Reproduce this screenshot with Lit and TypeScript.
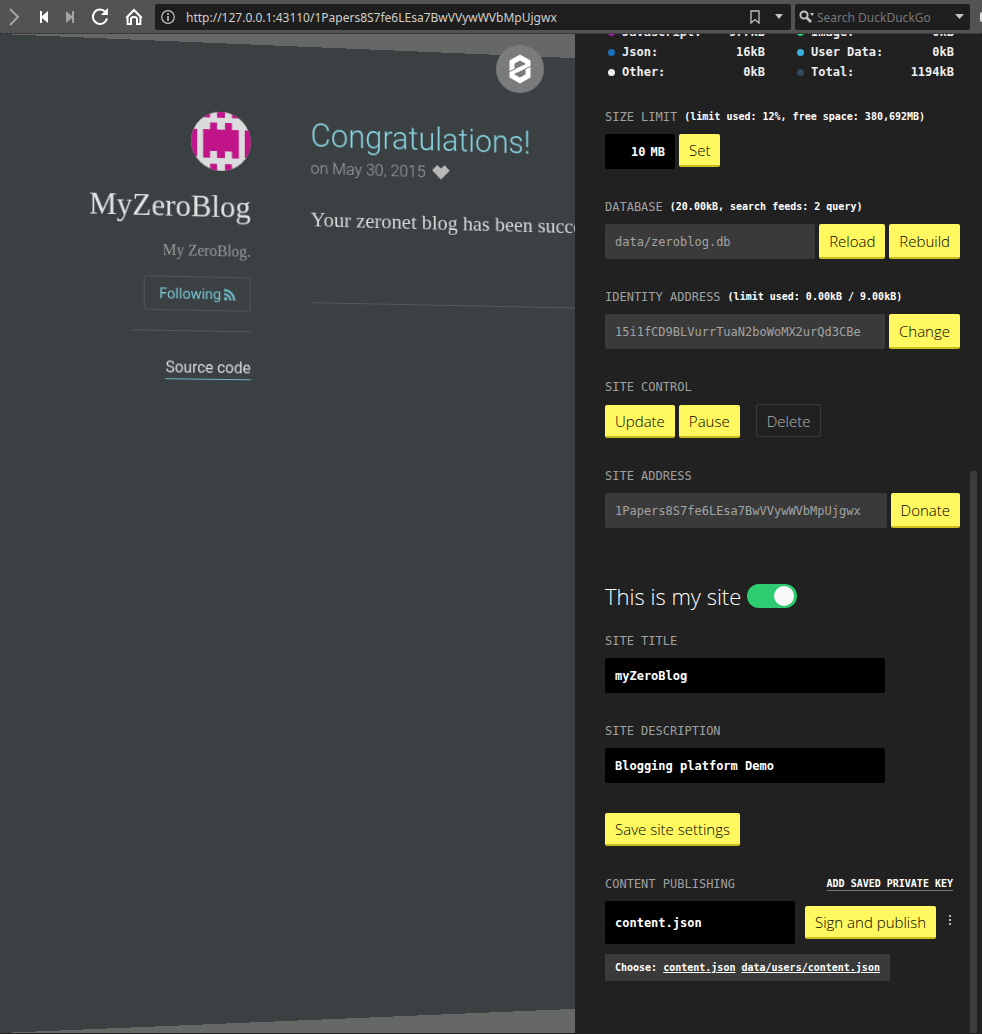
import { LitElement, html, css } from "lit";
import { customElement, state } from "lit/decorators.js";

interface Stat {
  name: string;
  value: string;
  color: string;
}

const STATS: Stat[] = [
  { name: "Javascript:", value: "977kB", color: "#b010c0" },
  { name: "Image:", value: "0kB", color: "#2ecc71" },
  { name: "Json:", value: "16kB", color: "#1a70b8" },
  { name: "User Data:", value: "0kB", color: "#3aaedc" },
  { name: "Other:", value: "0kB", color: "#f0f0f0" },
  { name: "Total:", value: "1194kB", color: "#34495e" },
];

@customElement("browser-bar")
export class BrowserBar extends LitElement {
  static styles = css`
    :host {
      display: flex;
      align-items: center;
      box-sizing: border-box;
      height: 34px;
      background: #535353;
      border-bottom: 1px dotted #222;
      overflow: hidden;
    }
    .nav {
      display: flex;
      align-items: center;
      flex: none;
      width: 155px;
    }
    button {
      display: flex;
      align-items: center;
      justify-content: center;
      flex: none;
      border: 0;
      padding: 0;
      background: none;
      color: #fff;
    }
    .tool { width: 26px; height: 26px; }
    .wide { width: 34px; height: 26px; }
    .expand { width: 31px; height: 26px; padding-right: 3px; }
    .muted { color: #a3a3a3; }
    .box {
      display: flex;
      align-items: center;
      box-sizing: border-box;
      height: 26px;
      border-radius: 2px;
      background: #1e1e1e;
      color: #c8c2c0;
    }
    .address { flex: 1; margin-right: 4px; padding: 0 2px 0 6px; min-width: 0; }
    .search { flex: none; width: 175px; margin-right: 10px; padding: 0 1px 0 4px; }
    input {
      flex: 1;
      min-width: 0;
      height: 26px;
      border: 0;
      padding: 2px 0 0;
      background: none;
      outline: none;
      color: #d2cfca;
      font: 12px "Noto Sans", "Open Sans", sans-serif;
    }
    .url { margin-left: 11px; }
    .query { margin-left: 2px; }
    .query::placeholder { color: #777; opacity: 1; }
    .mark { width: 28px; height: 26px; color: #c8c2c0; }
    .more { width: 20px; height: 26px; color: #c8c2c0; }
    .edge { flex: none; width: 2px; height: 10px; border-radius: 4px 0 0 4px; background: #ddd; }
  `;

  render() {
    return html`
      <div class="nav">
        <button class="expand muted" aria-label="Expand">
          <svg width="22" height="18" viewBox="0 0 22 18" fill="none" stroke="currentColor" stroke-width="2"><path d="M7 1l8 8-8 8" /></svg>
        </button>
        <button class="tool" aria-label="Rewind">
          <svg width="10" height="12" viewBox="0 0 10 12" fill="currentColor"><path d="M1 0h2v5l6-5v12L3 7v5H1z" /></svg>
        </button>
        <button class="tool muted" aria-label="Fast forward">
          <svg width="10" height="12" viewBox="0 0 10 12" fill="currentColor"><path d="M9 0H7v5L1 0v12l6-5v5h2z" /></svg>
        </button>
        <button class="wide" aria-label="Reload">
          <svg width="18" height="18" viewBox="0 0 18 18" fill="none" stroke="currentColor" stroke-width="2"><path d="M14.6 4.2A7.2 7.2 0 1 0 16 10.6" /><path d="M16.9 0v7H10z" fill="currentColor" stroke="none" /></svg>
        </button>
        <button class="wide" aria-label="Home">
          <svg width="18" height="18" viewBox="0 0 18 18" fill="none" stroke="currentColor" stroke-width="2"><path d="M1.2 10L9 2l7.8 8M2.6 8.5V16H6v-5q0-2 3-2t3 2v5h3.400V8.500" /></svg>
        </button>
      </div>
      <div class="box address">
        <svg width="14" height="14" viewBox="0 0 14 14" fill="none" stroke="currentColor" stroke-width="1.2"><circle cx="7" cy="7" r="6.300" /><path d="M7 6v5M7 3v2" stroke-width="1.600" /></svg>
        <input class="url" type="text" aria-label="Address" value="http://127.0.0.1:43110/1Papers8S7fe6LEsa7BwVVywWVbMpUjgwx" />
        <button class="mark" aria-label="Bookmark">
          <svg width="10" height="14" viewBox="0 0 10 14" fill="none" stroke="currentColor" stroke-width="1.300"><path d="M1 1h8v12L5 9.500 1 13z" /></svg>
        </button>
        <button class="more" aria-label="Address history">
          <svg width="8" height="5" viewBox="0 0 8 5" fill="currentColor"><path d="M0 0h8L4 5z" /></svg>
        </button>
      </div>
      <div class="box search">
        <svg width="16" height="14" viewBox="0 0 16 14" fill="none" stroke="currentColor"><circle cx="5" cy="5" r="3.600" stroke-width="2" /><path d="M7.500 7.500L12 12" stroke-width="2.600" /><path d="M11 3h4l-2 3z" fill="currentColor" stroke="none" /></svg>
        <input class="query" type="text" aria-label="Search" placeholder="Search DuckDuckGo" />
        <button class="more" aria-label="Search engines">
          <svg width="9" height="5" viewBox="0 0 9 5" fill="currentColor"><path d="M0 0h9L4.500 5z" /></svg>
        </button>
      </div>
      <span class="edge"></span>
    `;
  }
}

@customElement("blog-page")
export class BlogPage extends LitElement {
  static styles = css`
    :host {
      display: block;
      position: relative;
      overflow: hidden;
      background: #666866;
    }
    .sheet {
      display: flex;
      gap: 63px;
      box-sizing: border-box;
      width: 960px;
      height: 100%;
      padding-top: 70px;
      background: #3b4043;
      transform: perspective(1000px) rotateY(4.8deg);
      transform-origin: 0 50%;
    }
    .left {
      display: flex;
      flex-direction: column;
      align-items: flex-end;
      flex: none;
      width: 257px;
    }
    .avatar { display: block; border-radius: 50%; }
    h1 {
      margin: 16px 0 0;
      color: #e2e2e2;
      font: 32px/40px "Liberation Serif", serif;
    }
    .about {
      margin: 16px 0 0;
      color: #999;
      font: 16px/20px "Liberation Serif", serif;
    }
    .follow {
      display: flex;
      align-items: center;
      justify-content: center;
      gap: 3px;
      box-sizing: border-box;
      width: 111px;
      height: 35px;
      margin: 16px 0 0;
      border: 1px solid #505558;
      border-radius: 3px;
      padding: 0;
      background: none;
      color: #76c5d3;
      font: 15px Roboto, sans-serif;
    }
    hr {
      box-sizing: border-box;
      margin: 0;
      border: 0;
      border-top: 1px solid #54585b;
    }
    .left hr { width: 124px; margin: 20px 0 26px; }
    .source {
      border-bottom: 1px solid #6fb4c0;
      color: #dcdcdc;
      font: 16px/22px Roboto, sans-serif;
      text-decoration: none;
    }
    .post { flex: 1; min-width: 0; white-space: nowrap; }
    h2 {
      margin: 1px 0 0;
      color: #89d3e0;
      font: 300 33px/40px Roboto, sans-serif;
    }
    .meta {
      display: flex;
      align-items: center;
      gap: 7px;
      margin: 3px 0 0;
      color: #a0a0a0;
      font: 300 17px/20px Roboto, sans-serif;
    }
    .text {
      margin: 30px 0 72px;
      color: #d8d8d8;
      font: 22px/26px "Liberation Serif", serif;
    }
    .badge {
      position: absolute;
      top: 11px;
      right: 31px;
      display: flex;
      align-items: center;
      justify-content: center;
      width: 48px;
      height: 48px;
      border: 0;
      border-radius: 50%;
      padding: 0;
      background: #7a7b7d;
    }
  `;

  render() {
    return html`
      <div class="sheet">
        <div class="left">
          <svg class="avatar" width="62" height="60" viewBox="0 0 60 60" preserveAspectRatio="none">
            <rect width="60" height="60" fill="#dadcdb" />
            <g fill="#c01488">
              <path d="M11 0h8v6h-8zM26 0h8v6h-8zM41 0h8v6h-8zM0 18h6v28H0zM54 18h6v28h-6zM19 53h7v7h-7zM34 53h7v7h-7z" />
              <path d="M12 18h7v-7h7v7h8v-7h7v7h7v29h-7v-7h-7v7h-8v-7h-7v7h-7z" />
            </g>
          </svg>
          <h1>MyZeroBlog</h1>
          <p class="about">My ZeroBlog.</p>
          <button class="follow">
            Following
            <svg width="12" height="12" viewBox="0 0 12 12" fill="none" stroke="currentColor" stroke-width="2"><circle cx="1.800" cy="10.200" r="1.700" fill="currentColor" stroke="none" /><path d="M0 5.200a6.800 6.800 0 0 1 6.800 6.800M0 1.200A10.800 10.800 0 0 1 10.800 12" /></svg>
          </button>
          <hr />
          <a class="source" href="#source">Source code</a>
        </div>
        <div class="post">
          <h2>Congratulations!</h2>
          <p class="meta">
            on May 30, 2015
            <svg width="19" height="15" viewBox="0 0 19 15" fill="#b9b9b9"><path d="M5.500 0L9.500 3.500 13.500 0 19 5.500 9.500 15 0 5.500z" /></svg>
          </p>
          <p class="text">Your zeronet blog has been successfully created!</p>
          <hr />
        </div>
      </div>
      <button class="badge" aria-label="ZeroNet">
        <svg width="24" height="30" viewBox="0 0 24 30">
          <path fill="#fff" fill-rule="evenodd" d="M12 0.500L22.500 6.500V23.500L12 29.500 1.500 23.500V6.500zM12 6.500L6.500 9.500V15.200L17.500 10.200V9.500zM12 23.500L17.500 20.500V14.800L6.500 19.800V20.500z" />
          <path fill="none" stroke="#7a7b7d" d="M1 17.700L7 15M17 15L23 12.300" />
        </svg>
      </button>
    `;
  }
}

@customElement("site-sidebar")
export class SiteSidebar extends LitElement {
  @state() private mine = true;

  static styles = css`
    :host {
      display: block;
      position: relative;
      box-sizing: border-box;
      overflow: hidden;
      padding: 0 22px 0 30px;
      background: #212121;
      color: #fff;
      font: 12px/18px "DejaVu Sans Mono", monospace;
    }
    .stats {
      display: grid;
      grid-template-columns: 1fr 1fr;
      column-gap: 29px;
      margin: -12px 0 26px;
      padding: 0 6px 0 0;
      list-style: none;
      font-weight: bold;
      line-height: 20px;
    }
    .stats li { display: flex; align-items: center; color: #eee; }
    .dot { width: 7px; height: 7px; margin: 0 7px 0 3px; border-radius: 50%; }
    .value { margin-left: auto; }
    .field { margin: 0 0 29px; }
    .caption {
      display: flex;
      align-items: center;
      gap: 7px;
      height: 18px;
      margin: 0 0 8px;
      color: #a0a0a0;
    }
    .caption b { color: #fff; font-size: 10px; white-space: nowrap; }
    .row { display: flex; align-items: flex-start; gap: 4px; }
    .buttons { margin-top: 9px; }
    input[type="text"] {
      box-sizing: border-box;
      height: 35px;
      min-width: 0;
      border: 0;
      border-radius: 2px;
      padding: 0 10px;
      outline: none;
      background: #000;
      color: #fff;
      font: bold 12px "DejaVu Sans Mono", monospace;
    }
    .row input[readonly] {
      flex: 1;
      background: #3a3a3a;
      color: #a3a3a3;
      font-weight: normal;
    }
    .limit {
      display: flex;
      align-items: center;
      gap: 5px;
      box-sizing: border-box;
      width: 70px;
      height: 35px;
      padding-right: 10px;
      border-radius: 2px;
      background: #000;
      font-weight: bold;
    }
    .limit input[type="text"] {
      flex: 1;
      padding: 0;
      background: none;
      text-align: right;
    }
    .text { width: 280px; }
    button {
      box-sizing: border-box;
      flex: none;
      height: 33px;
      border: 0;
      border-bottom: 2px solid #cdbd1e;
      border-radius: 2px;
      padding: 0 10px;
      background: #fff85f;
      color: #000;
      font: 300 15px "Open Sans", "Noto Sans", sans-serif;
    }
    .tall { height: 35px; }
    .delete {
      margin: -1px 0 0 12px;
      border: 1px solid #3c3c3c;
      background: none;
      color: #b4b4b4;
    }
    h2 {
      display: flex;
      align-items: center;
      gap: 6px;
      height: 32px;
      margin: 52px 0 20px;
      font: 300 22px/32px "Open Sans", "Noto Sans", sans-serif;
    }
    .switch {
      appearance: none;
      display: flex;
      box-sizing: border-box;
      width: 50px;
      height: 24px;
      margin: 0;
      border-radius: 12px;
      padding: 2px 3px;
      background: #555;
    }
    .switch::before {
      content: "";
      width: 20px;
      height: 20px;
      border-radius: 50%;
      background: #fafafa;
    }
    .switch:checked { justify-content: flex-end; background: #2ecc71; }
    .save { display: block; margin: 30px 0 29px; }
    .publish .caption { justify-content: space-between; padding-right: 7px; }
    .key {
      border-bottom: 1px solid #777;
      color: #fff;
      font-size: 10px;
      font-weight: bold;
      line-height: 13px;
      text-decoration: none;
    }
    .sign { align-items: center; gap: 10px; }
    .sign input[type="text"] { width: 190px; height: 43px; }
    button.menu { width: 9px; height: 33px; border: 0; padding: 0 0 5px; background: none; color: #bbb; }
    .menu svg { display: block; margin: auto; }
    .choose {
      display: inline-block;
      margin: 10px 0 0;
      padding: 5px 10px;
      background: #3a3a3a;
      font-size: 10px;
      font-weight: bold;
      line-height: 17px;
    }
    .choose a { color: #fff; }
    .thumb {
      position: absolute;
      top: 437px;
      right: 5px;
      bottom: 0;
      width: 7px;
      border-radius: 2px 2px 0 0;
      background: #3c3c3c;
    }
  `;

  render() {
    return html`
      <ul class="stats">
        ${STATS.map(
          (s) => html`<li><span class="dot" style="background:${s.color}"></span>${s.name}<span class="value">${s.value}</span></li>`
        )}
      </ul>

      <div class="field">
        <label class="caption" for="limit">SIZE LIMIT <b>(limit used: 12%, free space: 380,692MB)</b></label>
        <div class="row">
          <span class="limit"><input id="limit" type="text" value="10" />MB</span>
          <button>Set</button>
        </div>
      </div>

      <div class="field">
        <label class="caption" for="db">DATABASE <b>(20.00kB, search feeds: 2 query)</b></label>
        <div class="row">
          <input id="db" type="text" readonly value="data/zeroblog.db" />
          <button class="tall">Reload</button>
          <button class="tall">Rebuild</button>
        </div>
      </div>

      <div class="field">
        <label class="caption" for="identity">IDENTITY ADDRESS <b>(limit used: 0.00kB / 9.00kB)</b></label>
        <div class="row">
          <input id="identity" type="text" readonly value="15i1fCD9BLVurrTuaN2boWoMX2urQd3CBe" />
          <button class="tall">Change</button>
        </div>
      </div>

      <div class="field">
        <div class="caption">SITE CONTROL</div>
        <div class="row buttons">
          <button>Update</button>
          <button>Pause</button>
          <button class="delete">Delete</button>
        </div>
      </div>

      <div class="field">
        <label class="caption" for="address">SITE ADDRESS</label>
        <div class="row">
          <input id="address" type="text" readonly value="1Papers8S7fe6LEsa7BwVVywWVbMpUjgwx" />
          <button class="tall">Donate</button>
        </div>
      </div>

      <h2>
        <label for="mine">This is my site</label>
        <input
          id="mine"
          class="switch"
          type="checkbox"
          .checked=${this.mine}
          @change=${(e: Event) => (this.mine = (e.target as HTMLInputElement).checked)}
        />
      </h2>

      <div class="field">
        <label class="caption" for="title">SITE TITLE</label>
        <div class="row"><input id="title" class="text" type="text" value="myZeroBlog" /></div>
      </div>

      <div class="field">
        <label class="caption" for="description">SITE DESCRIPTION</label>
        <div class="row"><input id="description" class="text" type="text" value="Blogging platform Demo" /></div>
      </div>

      <button class="save">Save site settings</button>

      <div class="publish">
        <div class="caption">
          <label for="content">CONTENT PUBLISHING</label>
          <a class="key" href="#key">ADD SAVED PRIVATE KEY</a>
        </div>
        <div class="row sign">
          <input id="content" type="text" value="content.json" />
          <button>Sign and publish</button>
          <button class="menu" aria-label="More">
            <svg width="3" height="11" viewBox="0 0 3 11" fill="currentColor"><path d="M0 0h2v2H0zM0 4h2v2H0zM0 8h2v2H0z" /></svg>
          </button>
        </div>
        <div class="choose">Choose: <a href="#content">content.json</a> <a href="#users">data/users/content.json</a></div>
      </div>
      <div class="thumb"></div>
    `;
  }
}

@customElement("app-root")
export class AppRoot extends LitElement {
  static styles = css`
    :host {
      display: grid;
      grid-template: auto minmax(0, 1fr) / minmax(0, 1fr) 407px;
      box-sizing: border-box;
      height: 100vh;
      overflow: hidden;
      border-bottom: 1px solid #212121;
      background: #212121;
    }
    browser-bar { grid-column: 1 / -1; }
  `;

  render() {
    return html`
      <browser-bar></browser-bar>
      <blog-page></blog-page>
      <site-sidebar></site-sidebar>
    `;
  }
}
